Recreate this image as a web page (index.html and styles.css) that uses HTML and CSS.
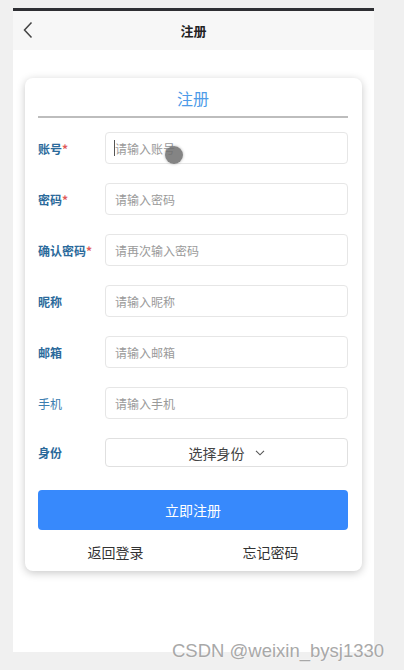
FILE: index.html
```html
<!DOCTYPE html>
<html>

<head>
    <title>注册</title>
    <link rel="stylesheet" href="styles.css">
</head>

<body>
    <div class="phone">
        <div class="header">
            <svg class="back" width="12" height="18" viewBox="0 0 12 18">
                <path d="M9.5 1.5 L2.5 9 L9.5 16.5" fill="none" stroke="#444" stroke-width="1.5" />
            </svg>
            <span class="header-title">注册</span>
        </div>

        <div class="content">
            <div class="card">
                <div class="card-title">注册</div>
                <div class="divider"></div>

                <div class="form">
                    <div class="row">
                        <label class="label">账号<span class="star">*</span></label>
                        <div class="field">
                            <span class="caret"></span>
                            <input class="input" type="text" placeholder="请输入账号">
                        </div>
                    </div>
                    <div class="row">
                        <label class="label">密码<span class="star">*</span></label>
                        <input class="input" type="password" placeholder="请输入密码">
                    </div>
                    <div class="row">
                        <label class="label">确认密码<span class="star">*</span></label>
                        <input class="input" type="password" placeholder="请再次输入密码">
                    </div>
                    <div class="row">
                        <label class="label">昵称</label>
                        <input class="input" type="text" placeholder="请输入昵称">
                    </div>
                    <div class="row">
                        <label class="label">邮箱</label>
                        <input class="input" type="text" placeholder="请输入邮箱">
                    </div>
                    <div class="row">
                        <label class="label light">手机</label>
                        <input class="input" type="text" placeholder="请输入手机">
                    </div>
                    <div class="row">
                        <label class="label">身份</label>
                        <div class="select">
                            <span>选择身份</span>
                            <svg width="10" height="6" viewBox="0 0 10 6">
                                <path d="M1 0.8 L5 4.8 L9 0.8" fill="none" stroke="#555" stroke-width="1.1" />
                            </svg>
                        </div>
                    </div>
                </div>

                <button class="submit">立即注册</button>

                <div class="links">
                    <span>返回登录</span>
                    <span>忘记密码</span>
                </div>
            </div>
        </div>
    </div>

    <div class="cursor"></div>
    <div class="watermark">CSDN @weixin_bysj1330</div>
</body>

</html>
```

FILE: styles.css
```css
body {
    margin: 0;
    background-color: #f0f0f0;
    font-family: "Noto Sans CJK SC", "Noto Sans", sans-serif;
    color: #333;
    position: relative;
    height: 670px;
    overflow: hidden;
}

.phone {
    margin: 8px 0 0 13px;
    width: 361px;
    height: 641px;
    border-top: 3px solid #2e2f33;
    background-color: #fff;
    display: flex;
    flex-direction: column;
}

.header {
    height: 39px;
    background-color: #f7f7f7;
    display: flex;
    align-items: center;
    justify-content: center;
    position: relative;
}

.back {
    position: absolute;
    left: 9px;
    top: 10px;
}

.header-title {
    font-size: 13px;
    font-weight: bold;
    color: #222;
}

.content {
    padding: 28px 12px 0;
}

.card {
    background-color: #fff;
    border-radius: 8px;
    box-shadow: 0 2px 8px rgba(0, 0, 0, 0.22);
    padding: 0 14px 4px 13px;
}

.card-title {
    padding-top: 9px;
    height: 29px;
    line-height: 22px;
    text-align: center;
    font-size: 16px;
    color: #4d9be8;
}

.divider {
    height: 2px;
    background-color: #bdbdbd;
}

.form {
    padding-top: 14px;
    display: flex;
    flex-direction: column;
    gap: 19px;
}

.row {
    display: flex;
    align-items: center;
}

.label {
    width: 67px;
    flex-shrink: 0;
    font-size: 12px;
    font-weight: bold;
    color: #2b6a9b;
}

.label.light {
    font-weight: normal;
    color: #3b7db0;
}

.star {
    color: #e05a5a;
}

.field {
    flex: 1;
    display: flex;
    position: relative;
}

.caret {
    position: absolute;
    left: 9px;
    top: 8px;
    width: 1px;
    height: 16px;
    background-color: #555;
}

.input {
    flex: 1;
    min-width: 0;
    height: 32px;
    box-sizing: border-box;
    border: 1px solid #e6e6e6;
    border-radius: 4px;
    padding: 0 9px;
    font-family: inherit;
    font-size: 12px;
    color: #333;
    outline: none;
}

.input::placeholder {
    color: #9a9a9a;
}

.select {
    flex: 1;
    height: 29px;
    box-sizing: border-box;
    border: 1px solid #e0e0e0;
    border-radius: 4px;
    display: flex;
    align-items: center;
    justify-content: center;
    gap: 10px;
    font-size: 14px;
    color: #444;
}

.submit {
    display: block;
    width: 100%;
    height: 40px;
    margin-top: 23px;
    border: none;
    border-radius: 4px;
    background-color: #3789fc;
    color: #fff;
    font-family: inherit;
    font-size: 14px;
    cursor: pointer;
}

.links {
    display: flex;
    justify-content: space-around;
    padding-top: 7px;
    font-size: 14px;
    line-height: 30px;
    color: #333;
}

.cursor {
    position: absolute;
    left: 165px;
    top: 146px;
    width: 18px;
    height: 18px;
    border-radius: 50%;
    background-color: rgba(110, 110, 110, 0.85);
    box-shadow: 0 0 3px rgba(0, 0, 0, 0.3);
}

.watermark {
    position: absolute;
    left: 172px;
    top: 640px;
    font-family: "Liberation Sans", Arial, sans-serif;
    font-size: 18.5px;
    color: #a8a8a8;
    text-shadow: 0 0 2px #fff;
}
```
